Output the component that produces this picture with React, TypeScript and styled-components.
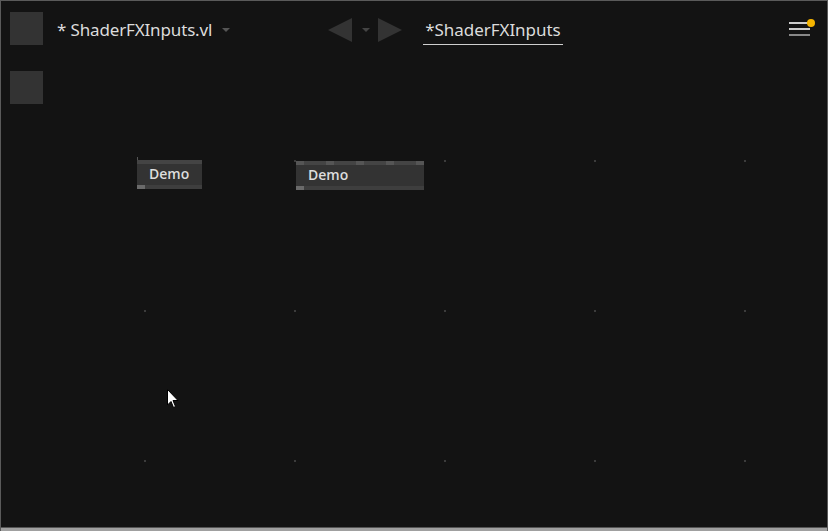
import * as React from 'react';
import styled, {createGlobalStyle} from 'styled-components';

const GRID_X = [144, 294, 444, 594, 744];
const GRID_Y = [160, 310, 460];

const GlobalStyle = createGlobalStyle`
  html, body {
    margin: 0;
    padding: 0;
    background: #131313;
  }
  body {
    font-family: "Noto Sans", "Open Sans", sans-serif;
  }
`;

const App = () => {
  return (
    <>
      <GlobalStyle />
      <Window>
        <Canvas>
          {GRID_Y.map(y => GRID_X.map(x => <Dot key={`${x}-${y}`} style={{left: x, top: y}} />))}
          <Node x={137} y={160} width={65} pins={1} label="Demo" />
          <Node x={296} y={161} width={128} pins={5} label="Demo" />
          <Cursor />
        </Canvas>
        <TopBar>
          <Square />
          <Title>* ShaderFXInputs.vl</Title>
          <Caret width="8" height="4" viewBox="0 0 8 4">
            <path d="M0 0 H8 L4 4 Z" fill="#555" />
          </Caret>
          <Nav>
            <Arrow width="24" height="24" viewBox="0 0 24 24">
              <path d="M0 12 L24 0 V24 Z" fill="#333" />
            </Arrow>
            <SmallCaret width="8" height="4" viewBox="0 0 8 4">
              <path d="M0 0 H8 L4 4 Z" fill="#444" />
            </SmallCaret>
            <Arrow width="24" height="24" viewBox="0 0 24 24">
              <path d="M0 0 L24 12 L0 24 Z" fill="#333" />
            </Arrow>
          </Nav>
          <Tab>*ShaderFXInputs</Tab>
          <Menu>
            <MenuLine $color="#ccc" />
            <MenuLine $color="#ccc" />
            <MenuLine $color="#888" />
            <Badge />
          </Menu>
        </TopBar>
        <Square />
        <BottomEdge />
      </Window>
    </>
  );
};

const Node = ({x, y, width, pins, label}: {x: number; y: number; width: number; pins: number; label: string}) => (
  <NodeBox style={{left: x, top: y, width}}>
    <NodeTop>
      {Array.from({length: pins}).map((_, i) => (
        <Pin key={i} $on={pins > 1} />
      ))}
    </NodeTop>
    <NodeLabel>{label}</NodeLabel>
    <NodeBottom>
      <Pin $on />
    </NodeBottom>
    {pins === 1 && <Tick />}
  </NodeBox>
);

const Cursor = () => (
  <CursorSvg width="13" height="20" viewBox="0 0 13 20">
    <path d="M0.5 0.5 V16 L4 12.5 L6.5 18.5 L8.5 17.5 L6 11.5 H11 Z" fill="#fff" stroke="#000" strokeWidth="1" />
  </CursorSvg>
);

const Window = styled.div`
  position: relative;
  width: 828px;
  height: 531px;
  box-sizing: border-box;
  border: 1px solid #5a5a5a;
  border-bottom: none;
  background: #131313;
  overflow: hidden;
  padding: 11px 0 0 9px;
  display: flex;
  flex-direction: column;
  gap: 26px;
`;

const Canvas = styled.div`
  position: absolute;
  inset: -1px;
`;

const Dot = styled.div`
  position: absolute;
  width: 2px;
  height: 2px;
  background: #3c3c3c;
`;

const TopBar = styled.div`
  position: relative;
  display: flex;
  align-items: center;
  height: 33px;
  padding-right: 17px;
`;

const Square = styled.div`
  position: relative;
  width: 33px;
  height: 33px;
  flex: none;
  background: #333;
`;

const Title = styled.div`
  margin-left: 14px;
  margin-top: 2px;
  font-size: 17px;
  color: #dcdcdc;
  letter-spacing: -0.15px;
`;

const Caret = styled.svg`
  margin-left: 10px;
  margin-top: 2px;
`;

const Nav = styled.div`
  display: flex;
  align-items: center;
  margin-left: 98px;
  margin-top: 2px;
`;

const Arrow = styled.svg`
  display: block;
`;

const SmallCaret = styled.svg`
  margin: 0 8px 0 10px;
`;

const Tab = styled.div`
  margin-left: 21px;
  margin-top: 5px;
  padding: 0 2px 3px 2px;
  border-bottom: 1px solid #cfcfcf;
  font-size: 17px;
  color: #dcdcdc;
  letter-spacing: -0.05px;
`;

const Menu = styled.div`
  position: relative;
  margin-left: auto;
  margin-top: 0;
  width: 21px;
  display: flex;
  flex-direction: column;
  gap: 4px;
`;

const MenuLine = styled.div<{$color: string}>`
  height: 2px;
  background: ${p => p.$color};
`;

const Badge = styled.div`
  position: absolute;
  top: -3px;
  right: -5px;
  width: 8px;
  height: 8px;
  border-radius: 50%;
  background: #f5b400;
`;

const NodeBox = styled.div`
  position: absolute;
  height: 29px;
  display: flex;
  flex-direction: column;
  background: #333;
`;

const NodeTop = styled.div`
  height: 4px;
  background: #444;
  display: flex;
  gap: 22px;
`;

const Pin = styled.div<{$on?: boolean}>`
  width: 8px;
  height: 4px;
  background: ${p => (p.$on ? '#555' : 'transparent')};
`;

const NodeLabel = styled.div`
  flex: 1;
  padding-left: 12px;
  font-family: "Open Sans", "Noto Sans", sans-serif;
  font-size: 14px;
  font-weight: 600;
  line-height: 20px;
  color: #dddddd;
`;

const NodeBottom = styled.div`
  height: 4px;
  background: #3e3e3e;
  display: flex;
  & > div {
    background: #6a6a6a;
  }
`;

const Tick = styled.div`
  position: absolute;
  left: 0;
  top: -3px;
  width: 1px;
  height: 3px;
  background: #555;
`;

const CursorSvg = styled.svg`
  position: absolute;
  left: 167px;
  top: 389px;
`;

const BottomEdge = styled.div`
  position: absolute;
  left: 0;
  right: 0;
  bottom: 0;
  height: 3px;
  border-top: 1px solid #555;
  background: #a0a0a0;
`;

export default App;
